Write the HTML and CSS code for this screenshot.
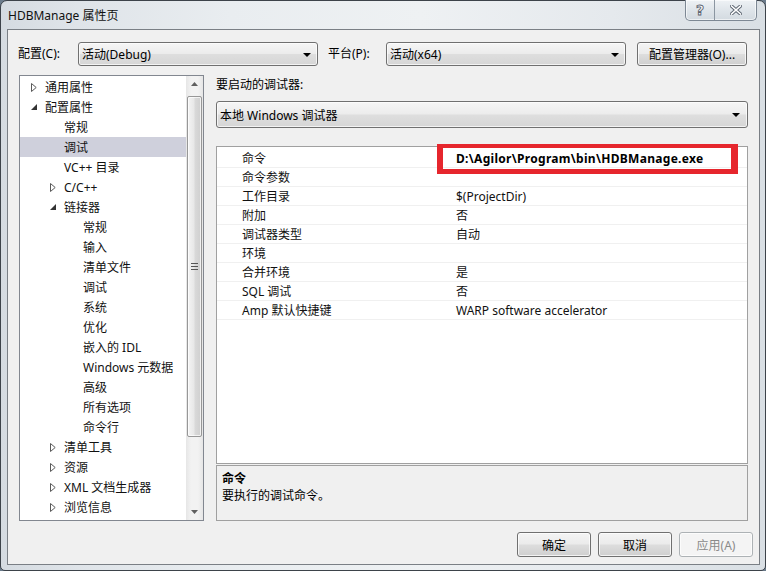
FILE: index.html
```html
<!DOCTYPE html>
<html lang="zh-CN">
<head>
<meta charset="utf-8">
<title>HDBManage 属性页</title>
<link rel="stylesheet" href="styles.css">
</head>
<body>
<div class="window">
  <div class="titlebar">
    <span class="title">HDBManage 属性页</span>
    <div class="caption-btns">
      <span class="cb help">?</span>
      <span class="cb close">
        <svg width="12" height="10" viewBox="0 0 12 10">
          <path d="M1.5 1 L10.5 9 M10.5 1 L1.5 9" stroke="#5b6470" stroke-width="3.4" stroke-linecap="square" fill="none"/>
          <path d="M1.5 1 L10.5 9 M10.5 1 L1.5 9" stroke="#ffffff" stroke-width="1.6" stroke-linecap="square" fill="none"/>
        </svg>
      </span>
    </div>
  </div>
  <div class="client">
    <div class="toprow">
      <span class="lbl lbl1">配置(C):</span>
      <div class="combo cw"><span class="ctext">活动(Debug)</span><i class="arrow"></i></div>
      <span class="lbl lbl2">平台(P):</span>
      <div class="combo cw"><span class="ctext">活动(x64)</span><i class="arrow"></i></div>
      <button class="btn mgr">配置管理器(O)...</button>
    </div>
    <div class="main">
      <div class="tree">
        <div class="nodes">
          <div class="node l0"><i class="tw"><svg width="6" height="9" viewBox="0 0 6 9"><polygon points="0.5,0.5 5.2,4.5 0.5,8.5" fill="none" stroke="#595959"/></svg></i><span>通用属性</span></div>
          <div class="node l0"><i class="tw"><svg width="6" height="6" viewBox="0 0 6 6"><polygon points="6,0 6,6 0,6" fill="#333"/></svg></i><span>配置属性</span></div>
          <div class="node l2"><span>常规</span></div>
          <div class="node l2 sel"><span>调试</span></div>
          <div class="node l2"><span>VC++ 目录</span></div>
          <div class="node l1"><i class="tw"><svg width="6" height="9" viewBox="0 0 6 9"><polygon points="0.5,0.5 5.2,4.5 0.5,8.5" fill="none" stroke="#595959"/></svg></i><span>C/C++</span></div>
          <div class="node l1"><i class="tw"><svg width="6" height="6" viewBox="0 0 6 6"><polygon points="6,0 6,6 0,6" fill="#333"/></svg></i><span>链接器</span></div>
          <div class="node l3"><span>常规</span></div>
          <div class="node l3"><span>输入</span></div>
          <div class="node l3"><span>清单文件</span></div>
          <div class="node l3"><span>调试</span></div>
          <div class="node l3"><span>系统</span></div>
          <div class="node l3"><span>优化</span></div>
          <div class="node l3"><span>嵌入的 IDL</span></div>
          <div class="node l3"><span>Windows 元数据</span></div>
          <div class="node l3"><span>高级</span></div>
          <div class="node l3"><span>所有选项</span></div>
          <div class="node l3"><span>命令行</span></div>
          <div class="node l1"><i class="tw"><svg width="6" height="9" viewBox="0 0 6 9"><polygon points="0.5,0.5 5.2,4.5 0.5,8.5" fill="none" stroke="#595959"/></svg></i><span>清单工具</span></div>
          <div class="node l1"><i class="tw"><svg width="6" height="9" viewBox="0 0 6 9"><polygon points="0.5,0.5 5.2,4.5 0.5,8.5" fill="none" stroke="#595959"/></svg></i><span>资源</span></div>
          <div class="node l1"><i class="tw"><svg width="6" height="9" viewBox="0 0 6 9"><polygon points="0.5,0.5 5.2,4.5 0.5,8.5" fill="none" stroke="#595959"/></svg></i><span>XML 文档生成器</span></div>
          <div class="node l1"><i class="tw"><svg width="6" height="9" viewBox="0 0 6 9"><polygon points="0.5,0.5 5.2,4.5 0.5,8.5" fill="none" stroke="#595959"/></svg></i><span>浏览信息</span></div>
        </div>
        <div class="vscroll">
          <div class="sbtn"><svg width="7" height="4" viewBox="0 0 7 4"><polygon points="3.5,0 7,4 0,4" fill="#606060"/></svg></div>
          <div class="track">
            <div class="thumb"><span class="grip"></span></div>
          </div>
          <div class="sbtn"><svg width="7" height="4" viewBox="0 0 7 4"><polygon points="0,0 7,0 3.5,4" fill="#606060"/></svg></div>
        </div>
      </div>
      <div class="right">
        <div class="rlabel">要启动的调试器:</div>
        <div class="combo dbg"><span class="ctext">本地 Windows 调试器</span><i class="arrow"></i></div>
        <div class="grid">
          <div class="row"><span class="pname">命令</span><span class="pval bold">D:\Agilor\Program\bin\HDBManage.exe</span></div>
          <div class="row"><span class="pname">命令参数</span><span class="pval"></span></div>
          <div class="row"><span class="pname">工作目录</span><span class="pval">$(ProjectDir)</span></div>
          <div class="row"><span class="pname">附加</span><span class="pval">否</span></div>
          <div class="row"><span class="pname">调试器类型</span><span class="pval">自动</span></div>
          <div class="row"><span class="pname">环境</span><span class="pval"></span></div>
          <div class="row"><span class="pname">合并环境</span><span class="pval">是</span></div>
          <div class="row"><span class="pname">SQL 调试</span><span class="pval">否</span></div>
          <div class="row"><span class="pname">Amp 默认快捷键</span><span class="pval">WARP software accelerator</span></div>
          <div class="highlight"></div>
        </div>
        <div class="desc">
          <div class="dtitle">命令</div>
          <div class="dtext">要执行的调试命令。</div>
        </div>
      </div>
    </div>
    <div class="bottom">
      <button class="btn dlg">确定</button>
      <button class="btn dlg">取消</button>
      <button class="btn dlg disabled">应用(A)</button>
    </div>
  </div>
</div>
</body>
</html>
```
FILE: styles.css
```css
* { box-sizing: border-box; margin: 0; padding: 0; }
html, body { width: 766px; height: 571px; overflow: hidden; }
body {
  font-family: "Noto Sans", "Noto Sans CJK SC", sans-serif;
  font-size: 12px;
  color: #000;
  background: #6c7c8c;
}
.window {
  width: 766px;
  height: 571px;
  border: 1px solid #3d434a;
  border-radius: 7px 7px 5px 5px;
  background: linear-gradient(to right, #d5dbe1 0%, #dfe4e9 10%, #e9edf0 30%, #eef1f3 55%, #e5e9ed 80%, #d9dfe4 100%);
  padding: 0 5px 5px 6px;
  display: flex;
  flex-direction: column;
}
.titlebar {
  height: 28px;
  display: flex;
  align-items: flex-start;
  padding-left: 1px;
}
.title {
  line-height: 28px;
  font-size: 12px;
  color: #111;
  padding-top: 1px;
}
.caption-btns {
  margin-left: auto;
  margin-right: 3px;
  margin-top: -1px;
  display: flex;
  height: 21px;
  border: 1px solid #7d8894;
  border-top: none;
  border-radius: 0 0 5px 5px;
  background: linear-gradient(to bottom, #eef2f5, #dfe5ea 50%, #d3dae0);
  box-shadow: inset 0 0 0 1px rgba(255,255,255,0.6);
}
.cb {
  display: flex;
  align-items: center;
  justify-content: center;
  height: 20px;
}
.help {
  width: 29px;
  border-right: 1px solid #8b96a1;
  font-size: 14px;
  font-weight: bold;
  color: #fff;
  -webkit-text-stroke: 0.9px #5b6470;
  font-family: "DejaVu Sans", sans-serif;
}
.close { width: 41px; }

.client {
  height: 536px;
  border: 1px solid #7a7f85;
  background: #f0f0f0;
  display: flex;
  flex-direction: column;
}
.toprow {
  display: flex;
  align-items: center;
  height: 24px;
  margin-top: 12px;
  padding-left: 10px;
}
.lbl { line-height: 24px; }
.lbl1 { width: 60px; }
.lbl2 { width: 58px; margin-left: 10px; }
.combo {
  display: flex;
  align-items: center;
  height: 24px;
  border: 1px solid #707070;
  border-radius: 3px;
  background: linear-gradient(to bottom, #f6f6f6 0%, #ececec 48%, #dedede 52%, #d6d6d6 100%);
  box-shadow: inset 0 0 0 1px rgba(255,255,255,0.7);
  padding: 0 6px 0 3px;
}
.cw { width: 240px; }
.ctext { flex: 1; white-space: nowrap; }
.arrow {
  width: 0; height: 0;
  border-left: 4px solid transparent;
  border-right: 4px solid transparent;
  border-top: 4px solid #000;
  margin-top: 1px;
}
.btn {
  font-family: inherit;
  font-size: 12px;
  font-weight: normal;
  color: #000;
  border: 1px solid #707070;
  border-radius: 3px;
  background: linear-gradient(to bottom, #f4f4f4 0%, #ebebeb 48%, #dddddd 52%, #cfcfcf 100%);
  box-shadow: inset 0 0 0 1px rgba(255,255,255,0.75);
}
.mgr { width: 110px; height: 24px; margin-left: 11px; }

.main {
  display: flex;
  height: 446px;
  margin-top: 9px;
  margin-left: 11px;
}
.tree {
  width: 185px;
  height: 446px;
  border: 1px solid #828790;
  background: #fff;
  display: flex;
}
.nodes {
  flex: 1;
  padding-top: 1px;
  overflow: hidden;
}
.node {
  height: 20px;
  display: flex;
  align-items: center;
  white-space: nowrap;
  color: #111;
}
.node.sel { background: #cfd0dc; }
.tw {
  width: 14px;
  display: flex;
  align-items: center;
}
.l0 { padding-left: 11px; }
.l1 { padding-left: 30px; }
.l2 { padding-left: 44px; }
.l3 { padding-left: 63px; }
.vscroll {
  width: 17px;
  display: flex;
  flex-direction: column;
  background: linear-gradient(to right, #e6e6e6, #f2f2f2 30%, #f2f2f2 70%, #e6e6e6);
}
.sbtn {
  height: 17px;
  display: flex;
  align-items: center;
  justify-content: center;
}
.track {
  flex: 1;
  padding: 3px 0 67px;
}
.thumb {
  height: 341px;
  margin: 0 1px;
  border: 1px solid #979797;
  border-radius: 2px;
  background: linear-gradient(to right, #f4f4f4, #e8e8e8 45%, #d9d9d9 55%, #cfcfcf);
  box-shadow: inset 0 0 0 1px rgba(255,255,255,0.7);
  display: flex;
  align-items: center;
  justify-content: center;
}
.grip {
  width: 7px;
  height: 7px;
  background: repeating-linear-gradient(to bottom, #555 0 1px, transparent 1px 3px);
}

.right {
  width: 532px;
  margin-left: 12px;
  display: flex;
  flex-direction: column;
}
.rlabel { line-height: 18px; height: 18px; padding-top: 1px; }
.dbg {
  width: 532px;
  height: 27px;
  margin-top: 8px;
  padding-left: 3px;
  padding-right: 7px;
}
.grid {
  position: relative;
  height: 318px;
  margin-top: 18px;
  border: 1px solid #a0a0a0;
  background: #fff;
  padding-top: 2px;
}
.row {
  display: flex;
  height: 19px;
  border-bottom: 1px solid #f0f0f0;
  align-items: center;
  white-space: nowrap;
}
.pname {
  width: 229px;
  padding-left: 25px;
  color: #111;
}
.pval { padding-left: 10px; color: #111; }
.bold { font-weight: bold; color: #000; letter-spacing: 0.3px; }
.highlight {
  position: absolute;
  left: 220px;
  top: -3px;
  width: 301px;
  height: 30px;
  border-style: solid;
  border-color: #e6262d;
  border-width: 4px 7px 5px 6px;
  pointer-events: none;
}
.desc {
  height: 56px;
  margin-top: 1px;
  border: 1px solid #a0a0a0;
  background: #f0f0f0;
  padding: 4px 5px 2px;
  line-height: 17px;
}
.dtitle { font-weight: bold; }

.bottom {
  display: flex;
  justify-content: flex-end;
  gap: 7px;
  margin-top: 11px;
  padding-right: 6px;
}
.dlg { width: 74px; height: 25px; }
.disabled {
  color: #8a8a8a;
  border-color: #adb2b5;
  background: #f4f4f4;
}
```
